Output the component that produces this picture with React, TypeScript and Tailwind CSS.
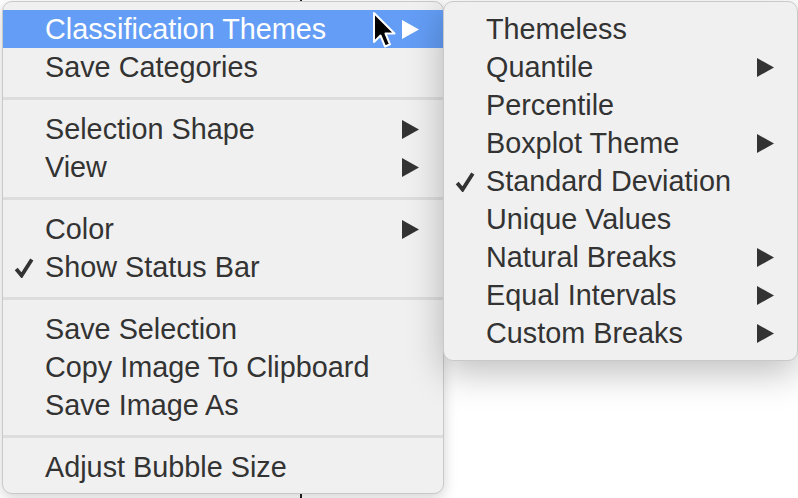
import React from 'react';

type Item =
  | { kind: 'sep' }
  | { kind: 'item'; label: string; sub?: boolean; checked?: boolean; active?: boolean };

const mainItems: Item[] = [
  { kind: 'item', label: 'Classification Themes', sub: true, active: true },
  { kind: 'item', label: 'Save Categories' },
  { kind: 'sep' },
  { kind: 'item', label: 'Selection Shape', sub: true },
  { kind: 'item', label: 'View', sub: true },
  { kind: 'sep' },
  { kind: 'item', label: 'Color', sub: true },
  { kind: 'item', label: 'Show Status Bar', checked: true },
  { kind: 'sep' },
  { kind: 'item', label: 'Save Selection' },
  { kind: 'item', label: 'Copy Image To Clipboard' },
  { kind: 'item', label: 'Save Image As' },
  { kind: 'sep' },
  { kind: 'item', label: 'Adjust Bubble Size' },
];

const subItems: Item[] = [
  { kind: 'item', label: 'Themeless' },
  { kind: 'item', label: 'Quantile', sub: true },
  { kind: 'item', label: 'Percentile' },
  { kind: 'item', label: 'Boxplot Theme', sub: true },
  { kind: 'item', label: 'Standard Deviation', checked: true },
  { kind: 'item', label: 'Unique Values' },
  { kind: 'item', label: 'Natural Breaks', sub: true },
  { kind: 'item', label: 'Equal Intervals', sub: true },
  { kind: 'item', label: 'Custom Breaks', sub: true },
];

function Check() {
  return (
    <svg width="20" height="21" viewBox="0 0 20 21" className="shrink-0">
      <path d="M2.2 12 L7.6 18.5 L17.8 2.5" fill="none" stroke="currentColor" strokeWidth="3.8" strokeLinejoin="miter" />
    </svg>
  );
}

function Arrow() {
  return (
    <svg width="17" height="19" viewBox="0 0 17 19" className="shrink-0">
      <path d="M0 0 L17 9.5 L0 19 Z" fill="currentColor" />
    </svg>
  );
}

function Row({ item, arrowRight }: { item: Extract<Item, { kind: 'item' }>; arrowRight: number }) {
  return (
    <div
      className={`flex items-center h-[38px] ${
        item.active ? 'bg-[#639df5] text-white' : 'text-[#333333]'
      }`}
    >
      <div className="w-[42px] flex justify-end pr-[11px]">{item.checked && <Check />}</div>
      <span className="flex-1 leading-none whitespace-nowrap">{item.label}</span>
      {item.sub && (
        <div className="flex items-center" style={{ marginRight: arrowRight }}>
          <Arrow />
        </div>
      )}
    </div>
  );
}

function Separator() {
  return (
    <div className="h-[24px] flex flex-col pt-[11px]">
      <div className="h-[3px] bg-[#dddddd]" />
    </div>
  );
}

function Cursor() {
  return (
    <svg width="26" height="40" viewBox="0 0 26 40" className="absolute left-[371px] top-[11px]">
      <path
        d="M3 2 L3 31 L9.5 24.5 L14 35.5 L19 33.3 L14.5 22.5 L23.5 22.5 Z"
        fill="#000"
        stroke="#fff"
        strokeWidth="2"
        strokeLinejoin="round"
      />
    </svg>
  );
}

export default function App() {
  return (
    <div
      className="relative w-[798px] h-[498px] bg-white overflow-hidden text-[28.8px]"
      style={{ fontFamily: '"Liberation Sans", Arial, sans-serif' }}
    >
      {/* window edge behind the menus */}
      <div className="absolute left-[300px] top-0 w-[2px] h-full bg-[#222]" />

      <div className="absolute left-[2px] top-[1px] w-[442px] h-[493px] rounded-[10px] bg-[#f0f0f0] border border-[#c9c9c9] shadow-[0_4px_14px_rgba(0,0,0,0.18)] overflow-hidden pt-[8px]">
        {mainItems.map((it, i) =>
          it.kind === 'sep' ? <Separator key={i} /> : <Row key={i} item={it} arrowRight={24} />
        )}
      </div>

      <Cursor />

      <div className="absolute left-[443px] top-[1px] w-[355px] h-[360px] rounded-[10px] bg-[#f0f0f0] border border-[#c9c9c9] shadow-[0_12px_36px_rgba(0,0,0,0.25)] overflow-hidden pt-[8px]">
        {subItems.map((it, i) =>
          it.kind === 'sep' ? <Separator key={i} /> : <Row key={i} item={it} arrowRight={23} />
        )}
      </div>
    </div>
  );
}
